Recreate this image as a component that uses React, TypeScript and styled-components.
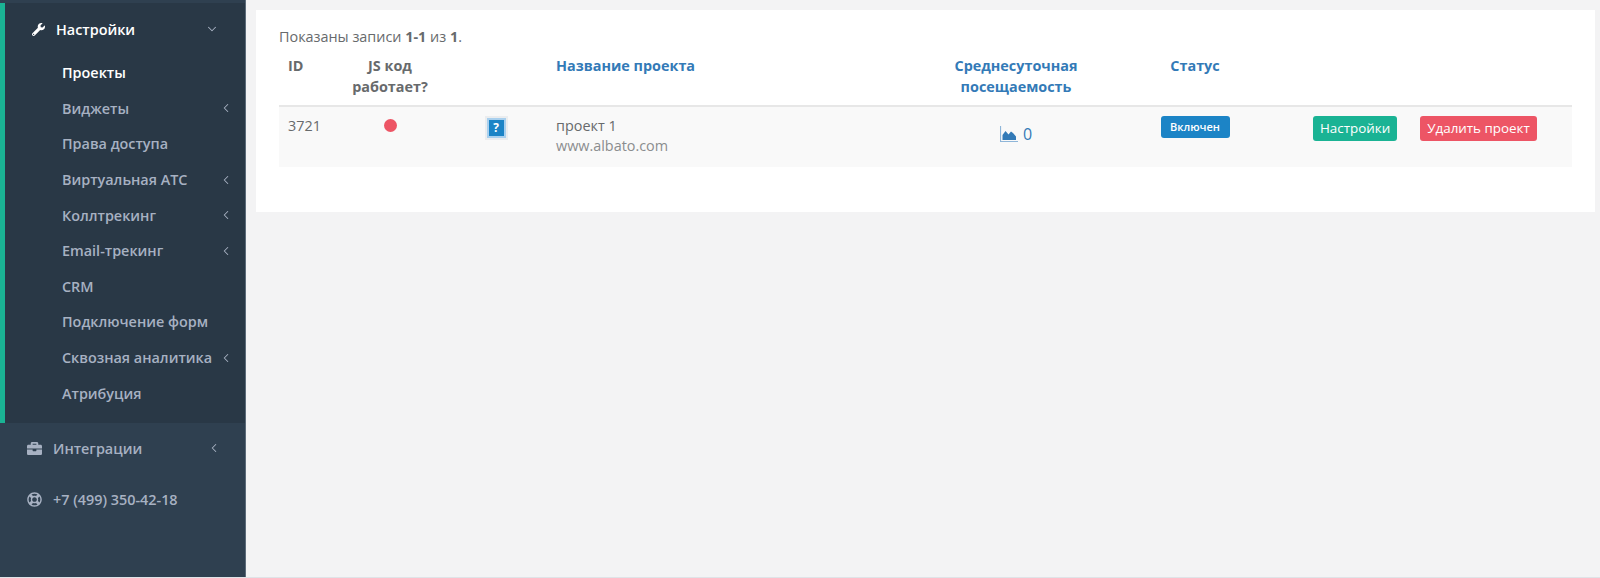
import styled, { createGlobalStyle } from 'styled-components';
import { FaBriefcase, FaRegLifeRing, FaWrench } from 'react-icons/fa';
import { ChevronDown, ChevronLeft } from 'lucide-react';

const GlobalStyle = createGlobalStyle`
  html, body {
    margin: 0;
    height: 100%;
    background: #f3f3f4;
    font-family: "Open Sans", "Liberation Sans", sans-serif;
    font-size: 14.4px;
    color: #676a6c;
  }
  * { box-sizing: border-box; }
`;

const Page = styled.div`
  display: flex;
  height: 578px;
  overflow: hidden;
  border-bottom: 1px solid #dfe3e7;
`;

const Sidebar = styled.aside`
  flex: none;
  width: 246px;
  padding-top: 3px;
  background: #2f4050;
  border-right: 1px solid #5d6c7a;
`;

const ActiveSection = styled.div`
  height: 420px;
  padding-top: 16px;
  background: #293846;
  border-left: 5px solid #1ab394;
`;

const SectionHead = styled.div`
  display: flex;
  align-items: center;
  height: 20px;
  padding-left: 27px;
  font-weight: 600;
  color: #fff;
`;

const HeadIcon = styled.span`
  display: flex;
  width: 24px;
  font-size: 13px;
`;

const HeadArrow = styled.span`
  display: flex;
  margin-left: auto;
  margin-right: 26px;
  color: #a7b1c2;
`;

const SubList = styled.div`
  display: flex;
  flex-direction: column;
  margin-top: 16px;
`;

const SubItem = styled.div<{ $active?: boolean }>`
  display: flex;
  align-items: center;
  height: 35.6px;
  padding-left: 57px;
  font-weight: 600;
  color: ${(p) => (p.$active ? '#fff' : '#a7b1c2')};
`;

const SubArrow = styled.span`
  display: flex;
  margin-left: auto;
  margin-right: 12px;
`;

const OuterItem = styled.div<{ $gap: number }>`
  display: flex;
  align-items: center;
  height: 20px;
  margin-top: ${(p) => p.$gap}px;
  padding-left: 27px;
  font-weight: 600;
  color: #a7b1c2;
`;

const OuterIcon = styled.span`
  display: flex;
  width: 26px;
  font-size: 15px;
`;

const OuterArrow = styled.span`
  display: flex;
  margin-left: auto;
  margin-right: 24px;
`;

const Main = styled.main`
  flex: 1;
  padding: 10px 5px 0 10px;
`;

const Card = styled.section`
  height: 202px;
  padding: 16px 23px 0;
  background: #fff;
`;

const Summary = styled.div`
  height: 21px;
  line-height: 21px;
  color: #676a6c;
`;

const Table = styled.table`
  width: 1293px;
  table-layout: fixed;
  border-collapse: collapse;
`;

const HeadCell = styled.th<{ $align?: string; $link?: boolean }>`
  height: 59px;
  padding: 8px 8px 7px;
  border-bottom: 2px solid #e7e7e7;
  vertical-align: top;
  line-height: 21px;
  font-weight: 700;
  text-align: ${(p) => p.$align || 'center'};
  color: ${(p) => (p.$link ? '#337ab7' : '#676a6c')};
`;

const IdHeadCell = styled(HeadCell)`
  padding-left: 9px;
`;

const Row = styled.tr`
  background: #f9f9f9;
`;

const Cell = styled.td<{ $align?: string }>`
  height: 61px;
  padding: 9px 8px 0;
  vertical-align: top;
  line-height: 20px;
  text-align: ${(p) => p.$align || 'center'};
`;

const IdCell = styled(Cell)`
  padding-left: 9px;
`;

const Dot = styled.span`
  display: block;
  width: 13px;
  height: 13px;
  margin: 3px auto 0;
  border-radius: 50%;
  background: #ed5565;
`;

const HelpButton = styled.span`
  display: block;
  width: 23px;
  height: 24px;
  margin: 0 auto;
  padding: 2px;
  background: #ebedef;
`;

const HelpInner = styled.span`
  display: flex;
  align-items: center;
  justify-content: center;
  width: 100%;
  height: 100%;
  border: 2px solid #a9d0ee;
  background: #1c84c6;
  font-size: 12px;
  font-weight: 700;
  color: #fff;
`;

const SiteUrl = styled.div`
  color: #8b8d8f;
`;

const Visits = styled.span`
  display: inline-flex;
  align-items: center;
  gap: 5px;
  margin-top: 8px;
  font-size: 16px;
  color: #337ab7;
`;

const Badge = styled.span`
  display: block;
  width: 69px;
  height: 22px;
  margin: 0 auto;
  border-radius: 3px;
  background: #1c84c6;
  line-height: 22px;
  font-size: 11px;
  font-weight: 600;
  color: #fff;
`;

const Actions = styled.div`
  display: flex;
  gap: 23px;
  padding-left: 31px;
`;

const Button = styled.span<{ $color: string }>`
  height: 25px;
  padding: 0 7px;
  border-radius: 3px;
  background: ${(p) => p.$color};
  line-height: 25px;
  font-size: 13.4px;
  color: #fff;
`;

const AreaIcon = () => (
  <svg width="18" height="16" viewBox="0 0 18 16">
    <path d="M0.5 0v15.5H18" fill="none" stroke="#8fb6d9" strokeWidth="1.2" />
    <path d="M2.5 14V9l3-4 3 3.5 2.5-3 2 1.5 3 3.5v3.5z" fill="#337ab7" />
  </svg>
);

const subItems = [
  { label: 'Проекты', active: true },
  { label: 'Виджеты', arrow: true },
  { label: 'Права доступа' },
  { label: 'Виртуальная АТС', arrow: true },
  { label: 'Коллтрекинг', arrow: true },
  { label: 'Email-трекинг', arrow: true },
  { label: 'CRM' },
  { label: 'Подключение форм' },
  { label: 'Сквозная аналитика', arrow: true },
  { label: 'Атрибуция' },
];

const columns = [57, 108, 104, 368, 200, 158, 298];

const App = () => {
  return (
    <Page>
      <GlobalStyle />
      <Sidebar>
        <ActiveSection>
          <SectionHead>
            <HeadIcon><FaWrench /></HeadIcon>
            Настройки
            <HeadArrow><ChevronDown size={14} strokeWidth={1.8} /></HeadArrow>
          </SectionHead>
          <SubList>
            {subItems.map((item) => (
              <SubItem key={item.label} $active={item.active}>
                {item.label}
                {item.arrow && <SubArrow><ChevronLeft size={14} strokeWidth={1.8} /></SubArrow>}
              </SubItem>
            ))}
          </SubList>
        </ActiveSection>
        <OuterItem $gap={15}>
          <OuterIcon><FaBriefcase /></OuterIcon>
          Интеграции
          <OuterArrow><ChevronLeft size={14} strokeWidth={1.8} /></OuterArrow>
        </OuterItem>
        <OuterItem $gap={31}>
          <OuterIcon><FaRegLifeRing /></OuterIcon>
          +7 (499) 350-42-18
        </OuterItem>
      </Sidebar>
      <Main>
        <Card>
          <Summary>Показаны записи <b>1-1</b> из <b>1</b>.</Summary>
          <Table>
            <colgroup>
              {columns.map((width, i) => <col key={i} width={width} />)}
            </colgroup>
            <thead>
              <tr>
                <IdHeadCell $align="left">ID</IdHeadCell>
                <HeadCell>JS код работает?</HeadCell>
                <HeadCell />
                <HeadCell $align="left" $link>Название проекта</HeadCell>
                <HeadCell $link>Среднесуточная посещаемость</HeadCell>
                <HeadCell $link>Статус</HeadCell>
                <HeadCell />
              </tr>
            </thead>
            <tbody>
              <Row>
                <IdCell $align="left">3721</IdCell>
                <Cell><Dot /></Cell>
                <Cell><HelpButton><HelpInner>?</HelpInner></HelpButton></Cell>
                <Cell $align="left">
                  проект 1
                  <SiteUrl>www.albato.com</SiteUrl>
                </Cell>
                <Cell><Visits><AreaIcon />0</Visits></Cell>
                <Cell><Badge>Включен</Badge></Cell>
                <Cell $align="left">
                  <Actions>
                    <Button $color="#1ab394">Настройки</Button>
                    <Button $color="#ed5565">Удалить проект</Button>
                  </Actions>
                </Cell>
              </Row>
            </tbody>
          </Table>
        </Card>
      </Main>
    </Page>
  );
};

export default App;
